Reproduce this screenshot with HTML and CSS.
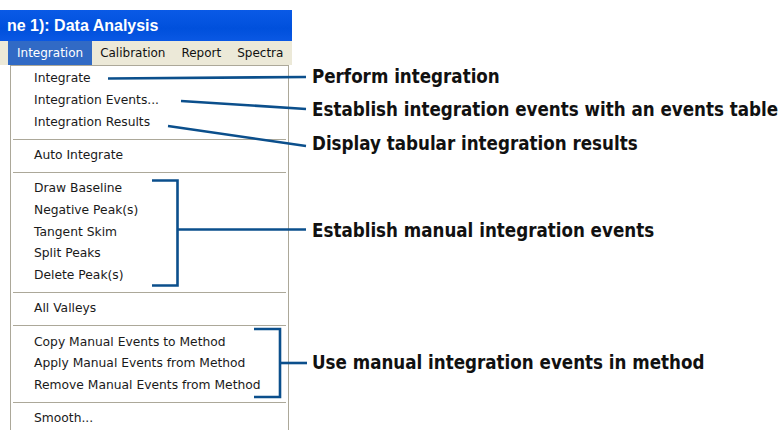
FILE: index.html
```html
<!DOCTYPE html>
<html>
<head>
<meta charset="utf-8">
<link rel="stylesheet" href="styles.css">
</head>
<body>
<div class="page">
  <div class="app">
    <div class="titlebar">ne 1): Data Analysis</div>
    <div class="menubar">
      <span class="mb-item active">Integration</span>
      <span class="mb-item">Calibration</span>
      <span class="mb-item">Report</span>
      <span class="mb-item">Spectra</span>
    </div>
    <div class="dropdown">
      <div class="mi">Integrate</div>
      <div class="mi">Integration Events...</div>
      <div class="mi">Integration Results</div>
      <div class="sep"></div>
      <div class="mi">Auto Integrate</div>
      <div class="sep"></div>
      <div class="mi">Draw Baseline</div>
      <div class="mi">Negative Peak(s)</div>
      <div class="mi">Tangent Skim</div>
      <div class="mi">Split Peaks</div>
      <div class="mi">Delete Peak(s)</div>
      <div class="sep"></div>
      <div class="mi">All Valleys</div>
      <div class="sep"></div>
      <div class="mi">Copy Manual Events to Method</div>
      <div class="mi">Apply Manual Events from Method</div>
      <div class="mi">Remove Manual Events from Method</div>
      <div class="sep"></div>
      <div class="mi">Smooth...</div>
    </div>
  </div>
  <div class="notes">
    <div class="note n1">Perform integration</div>
    <div class="note n2">Establish integration events with an events table</div>
    <div class="note n3">Display tabular integration results</div>
    <div class="note n4">Establish manual integration events</div>
    <div class="note n5">Use manual integration events in method</div>
  </div>
  <svg class="connectors" width="780" height="430" viewBox="0 0 780 430">
    <g fill="none" stroke="#0b4f8c" stroke-width="2.6">
      <line x1="108" y1="78.5" x2="306" y2="77"/>
      <line x1="181" y1="101" x2="306" y2="109"/>
      <line x1="168" y1="126" x2="306" y2="146"/>
      <polyline points="152,180.5 177.5,180.5 177.5,285.5 152,285.5"/>
      <line x1="177.5" y1="229.5" x2="306" y2="229.5"/>
      <polyline points="254,329 280,329 280,397 254,397"/>
      <line x1="280" y1="363" x2="307" y2="363"/>
    </g>
  </svg>
</div>
</body>
</html>
```
FILE: styles.css
```css
html, body {
  margin: 0;
  padding: 0;
  background: #ffffff;
}
body {
  width: 780px;
  height: 430px;
  overflow: hidden;
}
.page {
  position: relative;
  display: flex;
  width: 780px;
  height: 430px;
  overflow: hidden;
}
.app {
  flex: 0 0 292px;
  padding-top: 10px;
  display: flex;
  flex-direction: column;
}
.titlebar {
  height: 31px;
  line-height: 32px;
  padding-left: 7px;
  background: linear-gradient(#0a5ae6, #0050dc 60%, #0a58e4);
  color: #ffffff;
  font-family: "Liberation Sans", Arial, sans-serif;
  font-weight: bold;
  font-size: 16px;
  white-space: nowrap;
}
.menubar {
  height: 25px;
  background: #ece9d8;
  display: flex;
  align-items: stretch;
  padding-left: 8px;
  font-family: "DejaVu Sans", sans-serif;
  font-size: 12px;
  color: #111;
}
.mb-item {
  display: flex;
  align-items: center;
  padding: 0 8px 0 8px;
}
.mb-item.active {
  background: #316ac5;
  color: #ffffff;
  padding: 0 9px 0 9px;
}
.dropdown {
  margin-left: 10px;
  width: 277px;
  flex: 1;
  border: 1px solid #aca899;
  border-bottom: none;
  background: #ffffff;
  padding-top: 2px;
  font-family: "DejaVu Sans", sans-serif;
  font-size: 12.3px;
  color: #1a1a1a;
}
.mi {
  height: 21.7px;
  line-height: 21.7px;
  padding-left: 23px;
  white-space: nowrap;
}
.sep {
  height: 11.6px;
  display: flex;
  align-items: center;
  padding: 0 2px;
}
.sep::after {
  content: "";
  flex: 1;
  height: 1px;
  background: #aca899;
}
.notes {
  flex: 1;
  padding-left: 20px;
  display: flex;
  flex-direction: column;
  font-family: "Liberation Sans Narrow", "DejaVu Sans Condensed", sans-serif;
  font-weight: bold;
  font-size: 18.6px;
  color: #111;
  white-space: nowrap;
}
.note {
  height: 22px;
  line-height: 22px;
}
.n1 { margin-top: 66px; }
.n2 { margin-top: 11px; }
.n3 { margin-top: 12px; }
.n4 { margin-top: 65px; }
.n5 { margin-top: 110px; }
.connectors {
  position: absolute;
  left: 0;
  top: 0;
  pointer-events: none;
}
```
